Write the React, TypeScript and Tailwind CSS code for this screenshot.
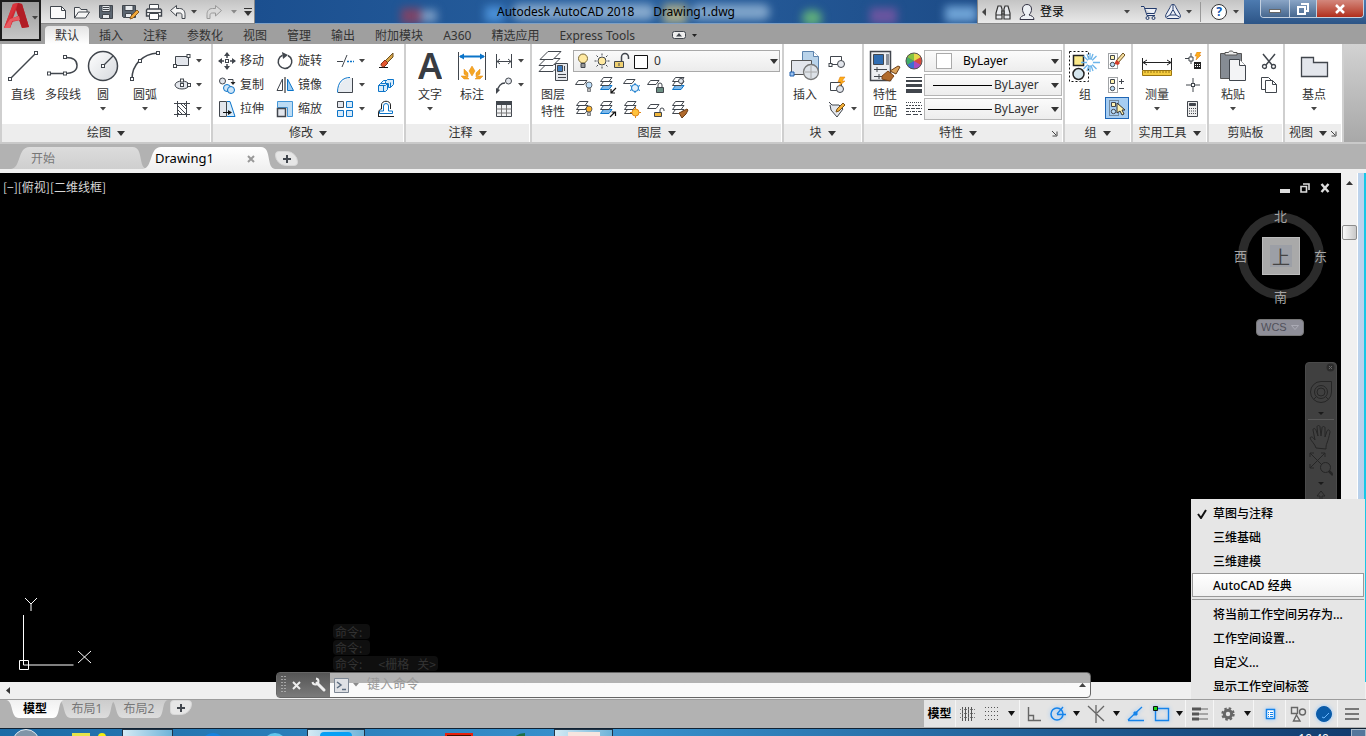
import React from "react";

const D = "#41464d";
const B = "#0b74c9";
const L = "#e3e6ec";

type P = { children?: React.ReactNode };

function Svg({ w, h, children, className = "" }: P & { w: number; h: number; className?: string }) {
  return (
    <svg width={w} height={h} viewBox={`0 0 ${w} ${h}`} fill="none" stroke={D} strokeWidth={1} className={`shrink-0 ${className}`} aria-hidden="true">
      {children}
    </svg>
  );
}

const S = ({ children }: P) => <Svg w={18} h={18}>{children}</Svg>;
const Big = ({ children }: P) => <Svg w={32} h={32}>{children}</Svg>;

const Caret = ({ light = false }: { light?: boolean }) => (
  <svg width="6" height="4" viewBox="0 0 6 4" className="shrink-0" aria-hidden="true">
    <path d="M0 0h6L3 3.500z" fill={light ? "#8a8a8a" : "#444"} />
  </svg>
);
const CaretL = () => (
  <svg width="8" height="5" viewBox="0 0 8 5" className="shrink-0" aria-hidden="true">
    <path d="M0 0h8L4 5z" fill="#333" />
  </svg>
);
const Corner = () => (
  <svg width="7" height="7" viewBox="0 0 7 7" fill="none" stroke="#444" aria-hidden="true">
    <path d="M1 1l4 4M6 1.500v4.500h-4.500" />
  </svg>
);

const Node = ({ x, y, c = D }: { x: number; y: number; c?: string }) => (
  <rect x={x - 1.5} y={y - 1.5} width="3" height="3" fill="#fff" stroke={c} />
);

const Sheet = ({ x = 0, y = 0, fill = "#fff", c = D }: { x?: number; y?: number; fill?: string; c?: string }) => (
  <path d={`M${x + 3.5} ${y + 0.5}h8.500l-3 4h-8.500z`} fill={fill} stroke={c} />
);
const Stack = ({ blue = false }: { blue?: boolean }) => (
  <g>
    <Sheet x={1} y={9} fill={blue ? "#7fb9ea" : "#fff"} c={blue ? B : D} />
    <Sheet x={1} y={5} />
    <Sheet x={1} y={1} />
  </g>
);

/* ---------- controls ---------- */

function BigButton({ icon, label, caret = false, w = "w-10" }: { icon: React.ReactNode; label: string; caret?: boolean; w?: string }) {
  return (
    <button type="button" className={`flex shrink-0 flex-col items-center pt-px ${w}`}>
      {icon}
      <span className="mt-px h-6 text-center leading-6 whitespace-nowrap">{label}</span>
      {caret && <Caret />}
    </button>
  );
}

function TallButton({ icon, lines }: { icon: React.ReactNode; lines: string[] }) {
  return (
    <button type="button" className="flex w-10 shrink-0 flex-col items-center pt-px">
      {icon}
      <span className="pt-1 leading-[17px]">
        {lines.map((l) => (
          <span key={l} className="block">{l}</span>
        ))}
      </span>
    </button>
  );
}

function Tool({ icon, name, label, caret = false }: { icon: React.ReactNode; name: string; label?: string; caret?: boolean }) {
  return (
    <button type="button" aria-label={label ? undefined : name} className="flex h-6 items-center">
      {icon}
      {label && <span className="pl-1 whitespace-nowrap">{label}</span>}
      {caret && <span className="pl-[5px]"><Caret /></span>}
    </button>
  );
}

function Panel({ title, w, children, arrow = true, corner = false }: P & { title: string; w: string; arrow?: boolean; corner?: boolean }) {
  return (
    <section className={`flex shrink-0 flex-col border-r-2 border-[#cfcfcf] bg-white pr-px ${w}`}>
      <div className="flex h-20 pt-[5px] pl-px">{children}</div>
      <button type="button" className={`relative flex h-[18px] items-center justify-center gap-1.5 bg-[#ededed] whitespace-nowrap ${corner ? "pr-2.5" : ""}`}>
        {title}
        {arrow && <CaretL />}
        {corner && <span className="absolute right-1"><Corner /></span>}
      </button>
    </section>
  );
}

/* ---------- title bar ---------- */

const q = "flex h-6 w-6 items-center justify-center";

function QuickAccess() {
  return (
    <div className="flex h-6 w-[214px] shrink-0 items-center border-r border-b border-[#888] bg-gradient-to-b from-[#c4c4c4] to-[#e9e9e9] pl-[5px]">
      <button type="button" aria-label="新建" className={q}><S><path d="M1.500 3.500h11l4 4v8h-15z" fill="#fbfbfb" /><path d="M12.500 3.500v4h4" /></S></button>
      <button type="button" aria-label="打开" className={q}><S><path d="M1.500 15V4.500h5l1.500 2h6V9M1.500 15l4-6h11l-4 6z" fill="#f5f5f5" /></S></button>
      <button type="button" aria-label="保存" className={q}><S><path d="M2.500 2.500h13v13h-12l-1-1z" fill="#5b6570" /><path d="M5 2.500h8v6H5z" fill="#e8ebee" /><path d="M5.500 11.500h7v4h-7z" fill="#e8ebee" /><path d="M6 4.500h6M6 6.500h6" /></S></button>
      <button type="button" aria-label="另存为" className={q}><S><path d="M1.500 2.500h13v12h-12l-1-1z" fill="#5b6570" /><path d="M4 2.500h8v5H4z" fill="#e8ebee" /><path d="M4.500 10.500h6v4h-6z" fill="#e8ebee" /><path d="M9 16l1-3 6-6 2 2-6 6z" fill="#f2a93b" stroke="#8a5a1e" /></S></button>
      <button type="button" aria-label="打印" className={q}><S><path d="M4.500 7V1.500h9V7" fill="#fff" /><path d="M1.500 7l1-1h13l1 1v6h-15z" fill="#f1f1f1" strokeWidth="1.400" /><path d="M4.500 10.500h9v6h-9z" fill="#fff" /><path d="M2 9.500h14" /></S></button>
      <button type="button" aria-label="放弃" className={q}><S><path d="M1.500 7.500l6-5v3h3c4 0 5.500 3 5.500 6v4h-3v-3c0-1.500-.500-2.500-2.500-2.500h-3v3z" fill="#f4f4f4" /></S></button>
      <span className="flex w-2 justify-center"><Caret /></span>
      <button type="button" aria-label="重做" className={`${q} ml-1`}><S><path d="M16.500 7.500l-6-5v3h-3c-4 0-5.500 3-5.500 6v4h3v-3c0-1.500.500-2.500 2.500-2.500h3v3z" fill="#d8d8d8" stroke="#999" /></S></button>
      <span className="ml-1 flex w-2 justify-center"><Caret light /></span>
      <button type="button" aria-label="自定义快速访问工具栏" className="ml-1.5 flex flex-col items-center gap-0.5">
        <span className="h-px w-2 bg-[#333]" />
        <CaretL />
      </button>
    </div>
  );
}

function TitleBar() {
  return (
    <div className="flex h-6 shrink-0">
      <QuickAccess />
      <div className="relative min-w-0 flex-1 overflow-hidden border-b border-[#7fa0c4] bg-gradient-to-r from-[#1b4f8f] via-[#28609f] to-[#1d4c88]">
        <div aria-hidden="true" className="absolute inset-0 flex items-center blur-[4px]">
          <span className="mt-2 ml-[146px] h-4 w-5 bg-[#7c4468]" />
          <span className="mt-2 h-3 w-4 bg-[#7b9cc4]" />
          <span className="mt-1 ml-12 h-4 w-5 bg-[#4a8fd6]" />
          <span className="ml-2 h-4 w-[144px] rounded-lg bg-[#86a9cd]" />
          <span className="mt-1 ml-2 h-5 w-6 bg-[#a5a98c]" />
          <span className="ml-1 h-4 w-20 rounded-lg bg-[#7fa4ca]" />
          <span className="mt-3 ml-8 h-4 w-5 rounded-full bg-[#5fae7c]" />
          <span className="mt-2 ml-12 h-4 w-7 bg-[#6a55a0]" />
          <span className="mt-1 ml-12 h-4 w-8 bg-[#6fa3d6]" />
        </div>
        <h1 className="relative text-center leading-[23px] whitespace-pre text-black">Autodesk AutoCAD 2018{"      "}Drawing1.dwg</h1>
      </div>
      <div className="flex w-[267px] shrink-0 items-center border-b border-l border-[#888] bg-gradient-to-b from-[#c4c4c4] to-[#e9e9e9] pl-1 text-black">
        <button type="button" aria-label="折叠" className="w-2"><svg width="4" height="8" viewBox="0 0 4 8" aria-hidden="true"><path d="M4 0v8L0 4z" fill="#444" /></svg></button>
        <button type="button" aria-label="搜索" className="ml-1"><Svg w={18} h={18}><g fill="#e6e8ec" stroke="#333" strokeWidth="1.200"><path d="M2 16v-6l2-7h3l1 3v10zM16 16v-6l-2-7h-3l-1 3v10z" /><path d="M8 8h2v3H8zM2 12h6M10 12h6" /></g></Svg></button>
        <button type="button" className="ml-1.5 flex items-center gap-1"><Svg w={18} h={18}><path d="M2 16.500c0-3 3-4 5-4.500-2-2-2.500-4-2.500-6 0-3 2-4.500 4.500-4.500s4.500 1.500 4.500 4.500c0 2-.5 4-2.500 6 2 .5 5 1.500 5 4.500z" fill="#eef1f5" stroke="#334" /></Svg>登录</button>
        <span className="ml-[60px]"><Caret /></span>
        <button type="button" aria-label="应用商店" className="ml-2.5"><Svg w={18} h={18}><path d="M1 3.500h3l3 9h8M5 5.500h11.500l-2 5H7" fill="#eef1f8" stroke="#223a6b" /><circle cx="7.500" cy="15" r="1.500" stroke="#223a6b" /><circle cx="13.500" cy="15" r="1.500" stroke="#223a6b" /></Svg></button>
        <button type="button" aria-label="Autodesk 360" className="ml-1.5 flex items-center gap-1"><Svg w={18} h={18}><g stroke="#223a6b"><path d="M9 1.500c2 0 2.500 1.500 3 3l4 7c1 2 0 4-2 4H4c-2 0-3-2-2-4l4-7c.5-1.500 1-3 3-3z" fill="#eef1f8" /><path d="M9 6.500l3 5.500H6zM9 2v4M2.500 14l3.500-2M15.500 14L12 12" /></g></Svg><Caret /></button>
        <span className="ml-2 h-5 w-px bg-[#999]" />
        <button type="button" aria-label="帮助" className="ml-2.5 flex items-center gap-1.5">
          <span className="flex h-4 w-4 items-center justify-center rounded-full border border-[#333] bg-white text-xs font-bold text-[#1258b0]">?</span>
          <Caret />
        </button>
      </div>
      <div className="flex w-[122px] shrink-0 bg-gradient-to-b from-[#4d7bb0] to-[#2c5486] pr-0.5 pl-4">
        <div className="flex h-[18px] flex-1 overflow-hidden rounded-b border border-t-0 border-[#c3d0e0]">
          <button type="button" aria-label="最小化" className="flex w-7 items-center justify-center bg-gradient-to-b from-[#8aa5c6] to-[#47688f]"><span className="mt-1 h-1 w-3 border border-[#666] bg-white" /></button>
          <button type="button" aria-label="还原" className="flex w-7 items-center justify-center border-x border-[#c3d0e0] bg-gradient-to-b from-[#8aa5c6] to-[#47688f]"><Svg w={12} h={12}><path d="M4 1h7v7H9M1 4h7v7H1z" stroke="#fff" strokeWidth="2" /></Svg></button>
          <button type="button" aria-label="关闭" className="flex flex-1 items-center justify-center bg-gradient-to-b from-[#d3877c] to-[#b02c1a]"><Svg w={12} h={10}><path d="M2 1l8 8M10 1L2 9" stroke="#fff" strokeWidth="2.500" /></Svg></button>
        </div>
      </div>
    </div>
  );
}

const ribbonTabs = ["默认", "插入", "注释", "参数化", "视图", "管理", "输出", "附加模块", "A360", "精选应用", "Express Tools"];

function Header() {
  return (
    <header className="flex shrink-0 bg-[#9f9f9f]">
      <button type="button" aria-label="应用程序菜单" className="flex h-[41px] w-[41px] shrink-0 items-start border-2 border-[#1d1d1d] bg-gradient-to-b from-[#9b9b9b] to-[#c6c6c6] pl-0.5">
        <Svg w={26} h={30}>
          <g stroke="none">
            <path d="M0 26L9 2l5-1 4 1 7 23-7 1-3-8-6 1-3 7z" fill="#cf2a33" />
            <path d="M9 2l5-1-8 16 9-3 1 4-8 2-2 6-6 0z" fill="#d9343d" />
            <path d="M14 1l4 1 7 23-7 1-6-18z" fill="#b11c25" />
            <path d="M12 8l2 6-5 2z" fill="#a9a9a9" />
            <path d="M0 26l6-9 9-3 1 4-8 1-2 7z" fill="#e85b62" />
          </g>
        </Svg>
        <span className="mt-3.5 pl-0.5"><Caret /></span>
      </button>
      <div className="min-w-0 flex-1">
        <TitleBar />
        <nav className="flex h-5 items-end pl-1">
          {ribbonTabs.map((t, i) => (
            <button
              key={t}
              type="button"
              className={`h-[18px] shrink-0 px-2.5 leading-5 whitespace-nowrap ${i === 0 ? "rounded-t-sm bg-gradient-to-b from-[#e4e4e4] to-white" : ""}`}
            >
              {t}
            </button>
          ))}
          <button type="button" aria-label="最小化功能区" className="ml-[27px] flex h-[18px] items-center gap-1.5">
            <Svg w={14} h={8}><rect x=".5" y=".5" width="13" height="7" rx="2" fill="#eee" /><path d="M4 5.500h6L7 2z" fill={D} stroke="none" /></Svg>
            <svg width="5" height="3" viewBox="0 0 5 3" aria-hidden="true"><path d="M0 0h5L2.500 3z" fill="#222" /></svg>
          </button>
        </nav>
      </div>
    </header>
  );
}

/* ---------- ribbon ---------- */

function DrawPanel() {
  return (
    <Panel title="绘图" w="w-[211px]">
      <BigButton label="直线" icon={<Big><path d="M3 29L29 3" strokeWidth="1.500" /><Node x={3} y={29} /><Node x={29} y={3} /></Big>} />
      <BigButton label="多段线" icon={<Big><path d="M2 23.500h15c8 0 13-2 13-8s-5-8-11-8" strokeWidth="1.500" /><Node x={2} y={23.5} /><Node x={18} y={23.5} /><Node x={18} y={7} /></Big>} />
      <BigButton label="圆" caret icon={<Big><defs><linearGradient id="cg" x1="0" y1="0" x2="1" y2="1"><stop stopColor="#fff" /><stop offset="1" stopColor="#d5d8dd" /></linearGradient></defs><circle cx="16" cy="16" r="14.500" fill="url(#cg)" strokeWidth="1.500" /><path d="M16 16L26 6" strokeWidth="1.200" /><Node x={16} y={16} /></Big>} />
      <BigButton label="圆弧" caret w="w-11" icon={<Big><path d="M3 29C3 15 13 4 29 3" strokeWidth="1.500" /><Node x={3} y={29} /><Node x={11} y={11} /><Node x={29} y={3} /></Big>} />
      <div className="ml-1.5">
        <Tool name="矩形" caret icon={<S><path d="M2.500 4.500h13v9h-13z" fill={L} /><Node x={2} y={14} /><Node x={15.5} y={4} /></S>} />
        <Tool name="椭圆" caret icon={<S><ellipse cx="9" cy="9" rx="7" ry="4" fill={L} /><Node x={9} y={9} /><Node x={9} y={4.5} /><Node x={16} y={9} /></S>} />
        <Tool name="图案填充" caret icon={<S><path d="M4.500 1v16M13.500 1v16M1 3.500h16M1 14.500h16M5 6l8 8M5 10l4 4M8 4l5 5M5 13l1 1M11 4l2 2" /></S>} />
      </div>
    </Panel>
  );
}

function ModifyPanel() {
  return (
    <Panel title="修改" w="w-[193px]">
      <div className="ml-1 w-[58px]">
        <Tool name="移动" label="移动" icon={<S><path d="M9 1v5M9 12v5M1 9h5M12 9h5" strokeWidth="1.500" /><path d="M9 0l3 4H6zM9 18l3-4H6zM0 9l4-3v6zM18 9l-4-3v6z" fill={D} stroke="none" /><Node x={9} y={9} /></S>} />
        <Tool name="复制" label="复制" icon={<S><circle cx="4.500" cy="5" r="3" fill={L} /><circle cx="9" cy="12" r="3.500" stroke={B} fill="#cfe5f7" /><circle cx="13" cy="14" r="3.500" stroke={B} fill="#cfe5f7" /><path d="M10 3.500h5v4" /><path d="M12.500 6h5L15 9z" fill="#222" stroke="none" /></S>} />
        <Tool name="拉伸" label="拉伸" icon={<S><path d="M1.500 1.500h7v15h-7z" fill={L} /><path d="M9 1.500h3l5 15H9" stroke={B} fill="#d9ebf9" /><path d="M5 12.500h6" stroke="#111" /><path d="M10 10l4 2.500-4 2.500z" fill="#111" stroke="none" /></S>} />
      </div>
      <div className="w-[60px]">
        <Tool name="旋转" label="旋转" icon={<S><path d="M12 3.500a6.800 6.800 0 1 1-5.500-.2" strokeWidth="1.500" /><path d="M6 0l6 3-5 4z" fill={D} stroke="none" /></S>} />
        <Tool name="镜像" label="镜像" icon={<S><path d="M6.500 3v11.500h-5.500z" /><path d="M11.500 3v11.500h6z" stroke={B} fill="#9fcdf0" /><path d="M9 1v16" stroke="#111" /></S>} />
        <Tool name="缩放" label="缩放" icon={<S><path d="M1.500 1.500h15v15h-5v-9h-10z" stroke="#4597d8" fill="#bcdcf5" /><path d="M1.500 8.500h8v8h-8z" fill={L} strokeWidth="1.500" /></S>} />
      </div>
      <div className="w-[41px]">
        <Tool name="修剪" caret icon={<S><path d="M1 9.500h6M6 15l5-12" /><path d="M11 9.500h7" stroke={B} strokeDasharray="2 1" strokeWidth="1.500" /></S>} />
        <Tool name="圆角" caret icon={<S><path d="M16.500 2v14.500H2C2.500 7 8 2 16.500 2z" fill="#e8ecf1" stroke="none" /><path d="M16.500 2v14.500H2" /><path d="M1.500 16.500C1.500 6 7 1.500 14 1.500" stroke={B} /></S>} />
        <Tool name="阵列" caret icon={<S><path d="M1.500 1.500h6v6h-6z" fill={L} /><path d="M10.500 1.500h6v6h-6zM1.500 10.500h6v6h-6zM10.500 10.500h6v6h-6z" stroke={B} fill="#d9ebf9" /></S>} />
      </div>
      <div>
        <Tool name="删除" icon={<S><path d="M2 15.500h9" stroke="#111" /><path d="M8 9l8-8v4l-6 6z" fill="#d7a54a" stroke="#6d5120" /><path d="M4 12l4-4 3 3-4 4c-2 0-3-1-3-3z" fill="#e4572e" stroke="#81341c" /></S>} />
        <Tool name="分解" icon={<S><g stroke={B} fill="#d9ebf9"><path d="M1.500 9.500l2-2h7v6l-2 2h-7z" /><path d="M8.500 5.500l2-2h6v5l-3 3h-2v-4h-3zM13.500 11.500v-5M3.500 7.500l3-3h3M6.500 9.500v6M1.500 9.500h7l2-2" /></g></S>} />
        <Tool name="偏移" icon={<S><path d="M6.500 11V6a2.500 2.500 0 0 1 5 0v5h4v2.500h-13V11z" stroke={B} /><path d="M1 16.500h16M1.500 16v-3c0-3 2-4 3-4V5c0-5 9-5 9 0v4" stroke="#222" /></S>} />
      </div>
    </Panel>
  );
}

function AnnotatePanel() {
  return (
    <Panel title="注释" w="w-[126px]">
      <BigButton label="文字" caret w="w-[46px]" icon={<span className="h-8 overflow-hidden font-['Noto_Sans',sans-serif] text-[36px] leading-8 font-semibold text-[#383c42]">A</span>} />
      <BigButton label="标注" w="w-[38px]" icon={<Big><path d="M2.500 2v28M29.500 2v28" /><path d="M4 6.500h24" stroke={B} strokeWidth="2" /><path d="M3 6.500l5-3v6zM29 6.500l-5-3v6z" fill={B} stroke="none" /><g fill="#f5a623" stroke="#e58a17" strokeWidth=".5"><path d="M16 16l3 5-3 5-3-5zM8 19l4 4 0 4-4-3zM24 19l-4 4 0 4 4-3zM5 26h5l3 3H8zM27 26h-5l-3 3h5z" /></g></Big>} />
      <div className="ml-1">
        <Tool name="线性" caret icon={<S><path d="M1.500 2v14M16.500 2v14M2 9.500h14M5 7l-3 2.500L5 12M13 7l3 2.500L13 12" /></S>} />
        <Tool name="引线" caret icon={<S><path d="M2 16c1-5 3-9 8-9" strokeWidth="1.300" /><circle cx="13.500" cy="5" r="3" fill={L} /><path d="M1 18l0-6 4 2z" fill={D} stroke="none" /></S>} />
        <Tool name="表格" icon={<S><path d="M1.500 1.500h15v15h-15z" fill="#f2f3f5" /><path d="M1 1h16v4H1z" fill={D} stroke="none" /><path d="M1.500 9h15M1.500 13h15M6.500 5v11M11.500 5v11" stroke="#777" /></S>} />
      </div>
    </Panel>
  );
}

const bulb = (c: string, x: number, y: number) => (
  <g><circle cx={x} cy={y} r="3" fill={c} stroke={D} strokeWidth=".8" /><path d={`M${x - 1.5} ${y + 3.5}h3v3h-3z`} fill="#bbb" stroke={D} strokeWidth=".6" /></g>
);
const arrow = (up: boolean) => <path d={up ? "M11 17l5-5M12.500 12h4v4" : "M17 12l-5 5M12 13v4h4"} stroke="#111" strokeWidth="1.200" />;

const layerTools: [string, React.ReactNode][] = [
  ["关闭图层", <S key="a"><Sheet x={0} y={4} />{bulb("#bfe0fb", 14, 9)}</S>],
  ["隔离", <S key="b"><Stack blue />{arrow(false)}</S>],
  ["冻结", <S key="c"><Sheet x={0} y={3} /><g stroke={B}><path d="M12 7v10M7 9.500l10 5M17 9.500l-10 5" /><circle cx="12" cy="12" r="3.500" fill="#e2f0fc" /></g></S>],
  ["锁定", <S key="d"><Sheet x={0} y={4} /><path d="M9.500 11.500h7v5h-7z" fill="#6c8f83" /><path d="M11 11V9a2 2 0 0 1 4 0v2" /></S>],
  ["置为当前", <S key="e"><Stack blue /><circle cx="10" cy="5" r="2.500" fill="#e3e6ec" /></S>],
  ["打开所有图层", <S key="f"><Stack />{bulb("#ffb52e", 14, 9)}</S>],
  ["取消隔离", <S key="g"><Stack blue />{arrow(true)}</S>],
  ["解冻", <S key="h"><Stack /><circle cx="12.500" cy="12.500" r="3.500" fill="#ffc23c" stroke="#e0861a" /><path d="M12.500 7v2M12.500 16v2M7 12.500h2M16 12.500h2" stroke="#e0861a" /></S>],
  ["解锁", <S key="i"><Sheet x={0} y={4} /><path d="M7.500 12.500h7v4h-7z" fill="#f0b63a" /><path d="M13 12v-2a2 2 0 0 1 4 0v1" /></S>],
  ["匹配图层", <S key="j"><Stack /><path d="M8 13l4-2 4-2 1 1-2 4-4 4z" fill="#b06a2c" stroke="#6b3d15" /></S>],
];

function LayersPanel() {
  return (
    <Panel title="图层" w="w-[252px]">
      <TallButton
        lines={["图层", "特性"]}
        icon={
          <Big>
            <g fill="#fff"><path d="M9 14.500h14l-7 7H2z" /><path d="M9 8.500h14l-7 7H2z" /><path d="M11 1.500h13l-8 8H3z" /></g>
            <path d="M18.500 13.500h12v17h-12z" fill="#e6e8ec" />
            <path d="M20.500 15.500h5v6h-5z" fill="#3d7cc0" />
            <path d="M27.500 16v5M21 24.500h8M21 27.500h8" />
          </Big>
        }
      />
      <div className="mr-px flex-1">
        <div className="relative flex h-6 items-center">
          <select aria-label="图层" className="h-[22px] w-full appearance-none border border-[#a9a9a9] bg-gradient-to-b from-[#fafafa] to-[#ececec] pl-20 outline-none">
            <option>0</option>
          </select>
          <div className="pointer-events-none absolute inset-0 flex items-center gap-0.5 pl-0.5">
            <Svg w={16} h={18}><circle cx="8" cy="6.500" r="4.500" fill="#ffe9a0" stroke="#7a6a3a" /><path d="M6 11.500h4v4H6z" fill="#999" /></Svg>
            <S><circle cx="9" cy="9" r="4" fill="#ffe9a0" /><path d="M9 1.500v2M9 14.500v2M1.500 9h2M14.500 9h2M3.500 3.500l1.500 1.500M13 13l1.500 1.500M14.500 3.500L13 5M5 13l-1.500 1.500" /></S>
            <S><path d="M1.500 9.500h9v6h-9z" fill="#f0d070" /><path d="M8.500 9V5a3.500 3.500 0 0 1 7 0v2" strokeWidth="1.500" /><path d="M6 11v3" /></S>
            <Svg w={15} h={15}><path d="M1.500 1.500h13v13h-13z" fill="#fff" stroke="#111" /></Svg>
            <span className="ml-auto pr-0.5"><CaretL /></span>
          </div>
        </div>
        <div className="grid w-fit grid-cols-[repeat(5,24px)] pl-0.5">
          {layerTools.map(([n, i]) => <Tool key={n} name={n} icon={i} />)}
        </div>
      </div>
    </Panel>
  );
}

function BlockPanel() {
  return (
    <Panel title="块" w="w-[80px]">
      <BigButton
        label="插入"
        icon={
          <Big>
            <path d="M13.500 1.500h11l5 5v16h-16z" fill="#b9d3ea" stroke="#5c83ad" />
            <path d="M24.500 1.500v5h5" fill="#fff" stroke="#5c83ad" />
            <path d="M2.500 10.500h20v14h-20z" fill={L} stroke="#555" />
            <circle cx="22" cy="22" r="7.500" fill="#dde2e8" stroke="#777" strokeWidth="1.300" />
            <path d="M22 16v12M16 22h12" stroke="#aaa" />
            <path d="M1 22h4v4H1z" fill="#9cc2ee" stroke="#1f5fae" />
          </Big>
        }
      />
      <div className="ml-[3px] shrink-0">
        <Tool name="创建块" icon={<S><path d="M2.500 4.500h11v8h-11z" fill="#fff" /><circle cx="13" cy="12" r="3.500" fill={L} /><Node x={2.5} y={13} /></S>} />
        <Tool name="编辑块" icon={<S><path d="M2.500 6.500h11v8h-11z" fill="#fff" /><circle cx="12" cy="13" r="3.500" fill={L} /><path d="M12 1h5l-3 4h3l-6 5 2-4h-3z" fill="#ffae1a" stroke="#d9760b" strokeWidth=".5" /></S>} />
        <Tool name="编辑属性" caret icon={<S><path d="M1 2l3 3h7l4 4-6 8-6-7-1-5" fill={L} /><path d="M8 12l1-3 6-6 2 2-6 6z" fill="#f2b03b" stroke="#7a5216" /></S>} />
      </div>
    </Panel>
  );
}

function LayerSelect({ label, kind }: { label: string; kind: "color" | "weight" | "type" }) {
  return (
    <div className="relative flex h-6 items-center">
      <select
        aria-label={label}
        className={`h-[22px] w-full appearance-none border border-[#b5b5b5] bg-gradient-to-b from-[#fbfbfb] to-[#ededed] outline-none ${kind === "color" ? "pl-[38px] text-black" : "pl-[69px]"}`}
      >
        <option>ByLayer</option>
      </select>
      <div className="pointer-events-none absolute inset-0 flex items-center">
        {kind === "color" && <span className="ml-3 h-4 w-4 border border-[#aaa] bg-white" />}
        {kind === "weight" && <span className="ml-[9px] h-px w-[59px] bg-black" />}
        {kind === "type" && <span className="ml-1 h-px w-16 bg-black" />}
        <span className="ml-auto pr-[3px]"><CaretL /></span>
      </div>
    </div>
  );
}

function PropsPanel() {
  return (
    <Panel title="特性" w="w-[201px]" corner>
      <TallButton
        lines={["特性", "匹配"]}
        icon={
          <Big>
            <path d="M1.500 1.500h20v29h-20z" fill="#eceef1" strokeWidth="1.500" />
            <path d="M4.500 4.500h10v10h-10z" fill="#2f6db2" />
            <path d="M17 4v11h3V4z" fill="#8a9099" stroke="none" />
            <path d="M5 19.500h13M8 17v5M5 26.500h8M10 24v5" />
            <path d="M21 21l8-5 2 1-4 7z" fill="#d9a15a" stroke="#6b3d15" />
            <path d="M13 26l6-5 6 5-4 5-8-2z" fill="#b06a2c" stroke="#7a4316" />
          </Big>
        }
      />
      <div className="mr-px w-[18px] shrink-0">
        <Tool name="对象颜色" icon={<S><g stroke="none"><circle cx="9" cy="9" r="8" fill="#d94a3a" /><path d="M9 9V1a8 8 0 0 1 7 4z" fill="#e8d84a" /><path d="M9 9L2 5a8 8 0 0 1 7-4z" fill="#86c440" /><path d="M9 9L2 13a8 8 0 0 1 0-8z" fill="#3fae6a" /><path d="M9 9v8a8 8 0 0 1-7-4z" fill="#3a6fd1" /><path d="M9 9l7 4a8 8 0 0 1-7 4z" fill="#a94bc0" /></g><circle cx="9" cy="9" r="8" stroke="#555" /></S>} />
        <Tool name="线宽" icon={<S><g stroke="none" fill={D}><path d="M1 1h16v1H1zM1 4h16v2H1zM1 8h16v3H1zM1 13h16v4H1z" /></g></S>} />
        <Tool name="线型" icon={<S><path d="M1 2.500h16" strokeDasharray="1 1" /><path d="M1 5.500h16" strokeDasharray="2 1" /><path d="M1 8.500h16" strokeDasharray="4 1" /><path d="M1 11.500h16" strokeDasharray="3 1 1 1" /><path d="M1 14.500h16" strokeDasharray="5 2" /></S>} />
      </div>
      <div className="flex-1">
        <LayerSelect label="颜色" kind="color" />
        <LayerSelect label="线宽" kind="weight" />
        <LayerSelect label="线型" kind="type" />
      </div>
    </Panel>
  );
}

const groupBase = (
  <g><path d="M1.500 1.500h9v15h-9z" strokeDasharray="1 1" /><path d="M3.500 3.500h4v4h-4z" fill="#fff3b0" /><circle cx="5.500" cy="12.500" r="2.200" fill="#bcdcf5" /></g>
);

function GroupPanel() {
  return (
    <Panel title="组" w="w-[68px]">
      <BigButton
        label="组"
        w="w-[38px]"
        icon={
          <Big>
            <path d="M.5 1.500h19v30H.500z" strokeDasharray="2 2" stroke="#111" />
            <path d="M4.500 5.500h10v10h-10z" fill="#fbe98a" stroke="#222" strokeWidth="1.500" />
            <circle cx="9.500" cy="24" r="5.500" fill="#d5e6ee" stroke="#222" strokeWidth="1.500" />
            <g stroke="#6db5ea" strokeWidth="1.300"><path d="M21 3v19M12 12.500h19M14.500 6l13 13M27.500 6l-13 13M18 4l6 17M24 4l-6 17" /></g>
            <circle cx="21" cy="12.500" r="3" fill="#fff" stroke="none" />
          </Big>
        }
      />
      <div className="flex flex-col pl-px">
        <Tool name="解除编组" icon={<span className="px-0.5"><S>{groupBase}<path d="M9 9l7-8 2 2-7 8z" fill="#f6dfa0" stroke="#6d5120" /><path d="M8 10l2-2 3 3-2 2-3-1z" fill="#d23c2a" stroke="none" /></S></span>} />
        <Tool name="组编辑" icon={<span className="px-0.5"><S>{groupBase}<path d="M12 5.500h5M14.500 3v5M12 12.500h5" /></S></span>} />
        <button type="button" aria-label="启用组选择" aria-pressed="true" className="flex h-[22px] w-6 items-center justify-center border border-[#1f66b5] bg-[#a6cdf2]">
          <S>{groupBase}<path d="M9 4v10l3-2 2 4 2-1-2-4h3z" fill="#fff3b0" stroke="#333" /></S>
        </button>
      </div>
    </Panel>
  );
}

function UtilPanel() {
  return (
    <Panel title="实用工具" w="w-[76px]">
      <BigButton label="测量" caret w="w-[46px]" icon={<Big><path d="M1.500 8v12M30.500 8v12M2 12.500h28M6 10l-4 2.500L6 15M26 10l4 2.500L26 15" stroke="#222" /><path d="M1.500 20.500h29v5h-29z" fill="#f3cb3e" stroke="#9a7410" /><path d="M4 21v2M7 21v2M10 21v2M13 21v2M16 21v2M19 21v2M22 21v2M25 21v2M28 21v2" stroke="#9a7410" /></Big>} />
      <div className="ml-1">
        <Tool name="快速选择" icon={<S><path d="M1 6.500h4M7 1v4M7 8v4" /><path d="M5 5h4v4H5z" fill="#fff" /><path d="M13 0h4l-2 3h2l-5 5 1-4h-2z" fill="#ffae1a" stroke="#d9760b" strokeWidth=".5" /><path d="M10 10h7v7h-7z" fill="#222" stroke="none" /><path d="M11 12.500h5M11 14.500h5" stroke="#fff" strokeDasharray="1 1" /></S>} />
        <Tool name="点" icon={<S><path d="M9 2v5M9 11v5M2 9h5M11 9h5" /><Node x={9} y={9} /></S>} />
        <Tool name="计算器" icon={<S><path d="M3.500 1.500h10v15h-10z" fill="#eee" /><path d="M5.500 3.500h6v2h-6z" fill={D} /><path d="M5 8.500h7M5 11h7M5 13.500h7" strokeDasharray="1 1" /></S>} />
      </div>
    </Panel>
  );
}

function ClipPanel() {
  return (
    <Panel title="剪贴板" w="w-[76px]" arrow={false}>
      <BigButton label="粘贴" caret w="w-[46px]" icon={<Big><path d="M3.500 3.500h21v25h-21z" fill="#868c94" stroke="#555" /><path d="M8 5V2.500h3.500c0-2 5-2 5 0H20V5z" fill="#ececec" stroke="#555" /><path d="M12.500 9.500h10l6 6v15h-16z" fill="#f3f4f6" /><path d="M22.500 9.500v6h6" fill="#fff" /></Big>} />
      <div className="ml-1">
        <Tool name="剪切" icon={<S><path d="M3 2l9 11M15 2L6 13" strokeWidth="1.500" /><circle cx="4.500" cy="14.500" r="2" strokeWidth="1.300" /><circle cx="13.500" cy="14.500" r="2" strokeWidth="1.300" /></S>} />
        <Tool name="复制剪裁" icon={<S><path d="M1.500 1.500h7l3 3v9h-10z" fill="#fff" /><path d="M5.500 4.500h7l4 4v8h-11z" fill="#fff" /><path d="M12.500 4.500v4h4" /></S>} />
      </div>
    </Panel>
  );
}

function Ribbon() {
  return (
    <div className="flex h-[100px] shrink-0 border-b-2 border-[#c9c9c9] bg-gradient-to-b from-[#d2d2d2] to-[#a8a8a8]">
      <div className="flex shrink-0 border-l-2 border-[#cfcfcf]">
        <DrawPanel />
        <ModifyPanel />
        <AnnotatePanel />
        <LayersPanel />
        <BlockPanel />
        <PropsPanel />
        <GroupPanel />
        <UtilPanel />
        <ClipPanel />
        <Panel title="视图" w="w-[59px]" corner>
          <BigButton label="基点" caret w="w-14" icon={<Big><path d="M3.500 7.500h12v5h14v14h-26z" fill={L} strokeWidth="1.300" /></Big>} />
        </Panel>
      </div>
    </div>
  );
}

/* ---------- file tabs ---------- */

const TabShape = ({ from, to, id }: { from: string; to: string; id: string }) => (
  <svg className="absolute inset-0 h-full w-full" viewBox="0 0 132 22" preserveAspectRatio="none" aria-hidden="true">
    <defs><linearGradient id={id} x1="0" y1="0" x2="0" y2="1"><stop stopColor={from} /><stop offset="1" stopColor={to} /></linearGradient></defs>
    <path d="M0 22C10 21 6 0 18 0h100c11 0 5 21 14 22z" fill={`url(#${id})`} />
  </svg>
);

function FileTabs() {
  return (
    <div className="flex h-[29px] shrink-0 items-end border-b-4 border-[#f0f0f0] bg-[#b2b2b2] pl-[11px]">
      <button type="button" className="relative -mr-1 h-[22px] w-[136px] pt-0.5 pl-5 text-left text-[#777]">
        <TabShape id="t1" from="#dcdcdc" to="#cfcfcf" />
        <span className="relative">开始</span>
      </button>
      <div className="relative flex h-[22px] w-[132px] items-center justify-between pt-0.5 pr-5 pl-3 text-black">
        <TabShape id="t2" from="#ffffff" to="#f0f0f0" />
        <button type="button" className="relative text-[13px]">Drawing1</button>
        <button type="button" aria-label="关闭 Drawing1" className="relative"><Svg w={8} h={8}><path d="M1 1l6 6M7 1L1 7" stroke="#999" strokeWidth="2" /></Svg></button>
      </div>
      <button type="button" aria-label="新建图形" className="mb-[3px] flex h-[15px] w-[23px] items-center justify-center rounded-tl rounded-tr-xl rounded-br rounded-bl-xl border border-[#d8d8d8] bg-[#e6e6e6]">
        <Svg w={8} h={8}><path d="M4 0v8M0 4h8" strokeWidth="2" /></Svg>
      </button>
    </div>
  );
}

/* ---------- drawing area ---------- */

function ViewCube() {
  return (
    <div className="absolute top-[35px] right-3 h-[102px] w-[96px] text-[13px] leading-4 text-[#a5a5a5]">
      <div className="absolute top-[5px] left-[5px] h-[86px] w-[86px] rounded-full border-[9px] border-[#2b2b2b]" />
      <button type="button" className="absolute top-[29px] left-[29px] flex h-[38px] w-[38px] items-center justify-center border border-[#bcbcbc] bg-[#a9a9a9]">
        <span className="flex h-[22px] w-[22px] items-center justify-center bg-[#9c9fa6] font-['Noto_Sans_CJK_SC',sans-serif] text-lg leading-5 text-[#444]">上</span>
      </button>
      <span className="absolute top-0 left-[41px]">北</span>
      <span className="absolute top-10 left-px">西</span>
      <span className="absolute top-10 left-[81px]">东</span>
      <span className="absolute top-[81px] left-[41px]">南</span>
    </div>
  );
}

function NavBar() {
  return (
    <div className="absolute top-[189px] right-1 flex h-[220px] w-8 flex-col items-center rounded-t border border-[#4a4a4a] bg-[#404040]">
      <button type="button" aria-label="关闭导航栏" className="mr-px self-end"><Svg w={9} h={9}><circle cx="4.500" cy="4.500" r="4" fill="#2c2c2c" stroke="none" /><path d="M3 3l3 3M6 3L3 6" stroke="#666" /></Svg></button>
      <button type="button" aria-label="控制盘" className="mt-2"><Svg w={24} h={24}><g stroke="#262626"><path d="M12 1.500h10.500V12A10.500 10.500 0 1 1 12 1.500z" /><circle cx="12" cy="12" r="6.500" /><circle cx="12" cy="12" r="4" /><path d="M4.500 19.500l3-3M19.500 19.500l-3-3" /></g></Svg></button>
      <span className="mt-2"><svg width="6" height="3" viewBox="0 0 6 3" aria-hidden="true"><path d="M0 0h6L3 3z" fill="#1a1a1a" /></svg></span>
      <span className="mt-1 h-px w-[26px] bg-[#5a5a5a]" />
      <button type="button" aria-label="平移" className="mt-1"><Svg w={24} h={26}><path d="M7 24c-1-4-5-7-6-10 1-2 3-1 5 2L4 6c0-2 2-2 3 0l2 6-1-9c0-2 3-2 3 0l1 9 1-8c0-2 3-2 3 0v9l2-6c1-2 3-1 3 1-1 5-2 8-3 11-1 2-1 4-1 6z" stroke="#262626" /></Svg></button>
      <button type="button" aria-label="范围缩放" className="mt-0.5"><Svg w={24} h={24}><g stroke="#262626"><path d="M1 5V1h4M1 1l15 15M12 1h4v4M16 1L1 16M1 12v4h4" /><circle cx="16.500" cy="15.500" r="5" fill="#404040" /><path d="M20 19l4 4" strokeWidth="2.500" /></g></Svg></button>
      <span className="mt-1.5"><svg width="6" height="3" viewBox="0 0 6 3" aria-hidden="true"><path d="M0 0h6L3 3z" fill="#1a1a1a" /></svg></span>
      <span className="mt-1"><Svg w={24} h={24}><path d="M12 2l4 5h-3v8h-2V7H8z" stroke="#262626" /></Svg></span>
    </div>
  );
}

function Canvas() {
  return (
    <main className="relative min-w-0 flex-1 overflow-hidden bg-black">
      <div className="flex items-start justify-between pr-[11px] pl-[3px] text-xs leading-4 text-[#d8d8d8]">
        <button type="button" className="mt-1.5 font-['Noto_Sans_CJK_SC',sans-serif]">[−][俯视][二维线框]</button>
        <div className="mt-2.5 flex items-center gap-2.5">
          <button type="button" aria-label="最小化视口" className="mt-1.5 h-1 w-2.5 bg-[#ddd]" />
          <button type="button" aria-label="还原视口"><Svg w={10} h={10}><path d="M3 1h6v6M1 3.500h5.500V9H1z" stroke="#ddd" strokeWidth="1.600" /></Svg></button>
          <button type="button" aria-label="关闭视口"><Svg w={10} h={10}><path d="M1.500 1l7 8M8.500 1l-7 8" stroke="#ddd" strokeWidth="2.400" /></Svg></button>
        </div>
      </div>
      <ViewCube />
      <button type="button" className="absolute top-[146px] right-[37px] flex h-[17px] w-12 items-center justify-between rounded border border-[#777] bg-[#8e8e98] px-1 font-['Liberation_Sans',sans-serif] text-[11px] text-[#50505a]">
        WCS
        <Svg w={8} h={5}><path d="M.5.500h7L4 4.500z" stroke="#aaaab4" /></Svg>
      </button>
      <NavBar />
      <svg width="76" height="76" viewBox="0 0 76 76" fill="none" stroke="#fff" className="absolute bottom-2.5 left-[18px]" aria-hidden="true">
        <path d="M5.500 19v50h50M1.500 64.500h9v9h-9zM7 2l6 6 6-6M13 8v7M60 55l13 12M73 55L60 67" />
      </svg>
      <div className="absolute bottom-[11px] left-[333px] flex flex-col items-start gap-px font-['Noto_Sans_CJK_SC',sans-serif] text-xs leading-[15px] text-[#333]">
        <span className="rounded-sm bg-[#0f0f0f] px-0.5 whitespace-pre">命令:{"  "}</span>
        <span className="rounded-sm bg-[#0f0f0f] px-0.5 whitespace-pre">命令:{"  "}</span>
        <span className="rounded-sm bg-[#0f0f0f] px-0.5 whitespace-pre">命令:{"      "}&lt;栅格{"   "}关&gt;</span>
      </div>
    </main>
  );
}

function CommandLine() {
  return (
    <div className="absolute right-[275px] bottom-px left-[276px] flex h-[26px] rounded-sm border border-[#666] bg-gradient-to-b from-[#b2b2b2] from-40% to-[#fafafa] to-40%">
      <div className="flex w-[53px] shrink-0 items-center gap-1.5 bg-gradient-to-b from-[#555] to-[#7b7b7b] pl-1">
        <Svg w={5} h={18}><path d="M1 0v18M4 0v18" stroke="#bbb" strokeDasharray="1 2" strokeWidth="1.500" /></Svg>
        <button type="button" aria-label="关闭命令行"><Svg w={9} h={9}><path d="M1 1l7 7M8 1L1 8" stroke="#eee" strokeWidth="2" /></Svg></button>
        <button type="button" aria-label="自定义" className="ml-1"><Svg w={16} h={16}><path d="M6 6l7 7" stroke="#eee" strokeWidth="3" strokeLinecap="round" /><path d="M5 1.500a3 3 0 1 1-3.500 3.500" stroke="#eee" strokeWidth="2" /></Svg></button>
      </div>
      <button type="button" aria-label="最近使用的命令" className="ml-1 flex items-center gap-1">
        <Svg w={15} h={15}><path d="M.5.500h14v14H.500z" fill="#dfe1e5" stroke="#7d8794" /><path d="M3 4l4 3-4 3M8 11.500h4" stroke="#5d6d80" strokeWidth="1.500" /></Svg>
        <Caret light />
      </button>
      <input aria-label="命令" placeholder="键入命令" className="ml-2 min-w-0 flex-1 bg-transparent pb-0.5 text-[13px] outline-none placeholder:text-[#999]" />
      <button type="button" aria-label="展开命令历史" className="px-1"><svg width="7" height="4" viewBox="0 0 7 4" aria-hidden="true"><path d="M0 4h7L3.500 0z" fill="#444" /></svg></button>
    </div>
  );
}

function MenuItem({ children, checked = false, active = false }: P & { checked?: boolean; active?: boolean }) {
  return (
    <button
      type="button"
      role="menuitem"
      className={`flex h-6 w-full items-center border pt-0.5 text-left ${active ? "border-[#999] bg-gradient-to-b from-white to-[#f1f1f1]" : "border-transparent"}`}
    >
      <span className="flex w-5 pl-1">
        {checked && <Svg w={11} h={10}><path d="M1 5l3 4 5-8" stroke="#111" strokeWidth="2" /></Svg>}
      </span>
      {children}
    </button>
  );
}

function WorkspaceMenu() {
  return (
    <div role="menu" className="absolute right-px bottom-0 w-[174px] bg-[#e6e6e6] px-px pt-0.5 pb-px font-medium text-black">
      <MenuItem checked>草图与注释</MenuItem>
      <MenuItem>三维基础</MenuItem>
      <MenuItem>三维建模</MenuItem>
      <MenuItem active>AutoCAD 经典</MenuItem>
      <hr className="my-0.5 border-[#999]" />
      <MenuItem>将当前工作空间另存为...</MenuItem>
      <MenuItem>工作空间设置...</MenuItem>
      <MenuItem>自定义...</MenuItem>
      <MenuItem>显示工作空间标签</MenuItem>
    </div>
  );
}

/* ---------- bottom bars ---------- */

function LayoutTab({ children, active = false, id }: P & { active?: boolean; id: string }) {
  return (
    <button type="button" className={`relative -mr-1.5 h-[18px] w-[58px] text-center leading-[18px] ${active ? "z-10 font-bold text-black" : "text-[#777]"}`}>
      <svg className="absolute inset-0 h-full w-full" viewBox="0 0 58 18" preserveAspectRatio="none" aria-hidden="true">
        <defs><linearGradient id={id} x1="0" y1="0" x2="0" y2="1"><stop stopColor={active ? "#f0f0f0" : "#cccccc"} /><stop offset="1" stopColor={active ? "#ffffff" : "#dddddd"} /></linearGradient></defs>
        <path d="M0 0c8 1 4 18 13 18h34c8 0 4-17 11-18z" fill={`url(#${id})`} />
      </svg>
      <span className="relative">{children}</span>
    </button>
  );
}

const glow = "drop-shadow-[0_0_2px_#8cc4ff]";
const A = "#1583ea";
const K = () => <svg width="7" height="5" viewBox="0 0 7 5" aria-hidden="true"><path d="M0 0h7L3.500 5z" fill="#111" /></svg>;

const statusItems: { n: string; w: string; i: React.ReactNode; sep?: boolean }[] = [
  { n: "栅格", w: "w-6", i: <S><path d="M3.500 2v14M6.500 2v14M9.500 2v14M12.500 2v14" stroke="#555" /><path d="M1 4.500h15M1 8.500h15M1 12.500h15" stroke="#777" strokeDasharray="1 1" /></S> },
  { n: "捕捉", w: "w-6", i: <S><path d="M2 2.500h14M2 6.500h14M2 10.500h14M2 14.500h14" stroke="#555" strokeDasharray="1 2" /></S> },
  { n: "捕捉设置", w: "w-4", i: <K />, sep: true },
  { n: "正交", w: "w-7", i: <S><path d="M3.500 2v13.500H16M4 10.500h4.500v5" stroke="#666" strokeWidth="1.400" /></S> },
  { n: "极轴追踪", w: "w-5", i: <Svg w={18} h={18} className={glow}><circle cx="8" cy="9" r="6" stroke={A} strokeWidth="1.500" /><path d="M8 9.500h9M8 9l6-7" stroke={A} strokeWidth="1.300" /></Svg> },
  { n: "极轴设置", w: "w-4", i: <K /> },
  { n: "等轴测草图", w: "w-6", i: <S><path d="M1 1l16 15M9 0v18M17 1L10 8" stroke="#666" strokeWidth="1.300" /></S> },
  { n: "等轴测设置", w: "w-4", i: <K /> },
  { n: "对象捕捉追踪", w: "w-6", i: <Svg w={18} h={18} className={glow}><path d="M1 15.500h16M1 15L15 2" stroke={A} strokeWidth="1.300" /><path d="M7 7h3v3H7z" fill={A} stroke={A} /></Svg> },
  { n: "对象捕捉", w: "w-[26px]", i: <Svg w={18} h={18} className={glow}><path d="M3.500 3.500h13v12h-13z" stroke={A} strokeWidth="1.400" /><path d="M1.500 1.500h4v4h-4z" fill="#19d619" stroke="#111" /></Svg> },
  { n: "对象捕捉设置", w: "w-3", i: <K />, sep: true },
  { n: "线宽显示", w: "w-7", i: <S><path d="M1 4h16M1 9h16M1 14h16" stroke="#666" /><path d="M1 4h9M1 9h7M1 14h7" stroke="#555" strokeWidth="3" /></S>, sep: true },
  { n: "切换工作空间", w: "w-7", i: <S><circle cx="9" cy="9" r="3.700" stroke="#666" strokeWidth="3" /><circle cx="9" cy="9" r="5.700" stroke="#666" strokeWidth="2" strokeDasharray="2.500 1.980" /></S> },
  { n: "工作空间设置", w: "w-3", i: <K />, sep: true },
  { n: "快捷特性", w: "w-8", i: <Svg w={18} h={18} className={glow}><path d="M5.500 4.500h8v9h-8z" fill="#fff" stroke={A} strokeWidth="1.500" /><path d="M7 7.500h5M7 9.500h5M7 11.500h5" stroke={A} strokeDasharray="1 1 3 0" /></Svg>, sep: true },
  { n: "隔离对象", w: "w-6", i: <S><path d="M2.500 2.500h6v6h-6zM7.500 10l3.500 6H4.500z" stroke="#666" strokeWidth="1.400" /><circle cx="13.500" cy="7" r="3" stroke="#666" strokeWidth="1.400" /></S>, sep: true },
  { n: "硬件加速", w: "w-7", i: <Svg w={18} h={18} className={glow}><circle cx="9" cy="9" r="7.500" fill="#0a5ba8" stroke="#0a5ba8" /><path d="M7 12l2 1 5-5" stroke="#6ab7ff" /></Svg>, sep: true },
  { n: "自定义", w: "w-7", i: <S><path d="M2 4h14M2 9h14M2 14h14" stroke="#555" strokeWidth="1.500" /></S> },
];

function BottomBar() {
  return (
    <footer className="flex h-[29px] shrink-0 justify-between border-t border-[#9c9c9c] bg-[#b2b2b2]">
      <div className="flex items-start pl-1.5">
        <LayoutTab id="l1" active>模型</LayoutTab>
        <LayoutTab id="l2">布局1</LayoutTab>
        <LayoutTab id="l3">布局2</LayoutTab>
        <button type="button" aria-label="新建布局" className="ml-2 flex h-[15px] w-[22px] items-center justify-center rounded-tl rounded-tr rounded-br-xl rounded-bl border border-[#d8d8d8] bg-[#e6e6e6]">
          <Svg w={8} h={8}><path d="M4 0v8M0 4h8" strokeWidth="2" /></Svg>
        </button>
      </div>
      <div className="flex h-[27px] bg-[#e4e4e4] text-black">
        <button type="button" className="w-8 border-r border-[#f4f4f4] font-bold">模型</button>
        {statusItems.map((s) => (
          <button key={s.n} type="button" aria-label={s.n} className={`flex items-center justify-center ${s.w} ${s.sep ? "border-r border-[#f6f6f6]" : ""}`}>
            {s.i}
          </button>
        ))}
      </div>
    </footer>
  );
}

function Taskbar() {
  return (
    <div className="flex h-2 shrink-0 items-start overflow-hidden border-t border-[#123] bg-gradient-to-r from-[#1c6ba6] via-[#3a93cf] via-45% to-[#123a6d] text-white">
      <span className="ml-3 h-7 w-7 shrink-0 rounded-full border border-[#dfe9f2] bg-[#8095a8]" />
      <span className="mt-1 ml-8 h-4 w-[18px] shrink-0 bg-[#e6e34a]" />
      <span className="mt-1 ml-2 h-4 w-2 shrink-0 rounded-t bg-[#f5ee10]" />
      <span className="ml-4 h-4 w-[51px] shrink-0 border border-[#234] bg-gradient-to-r from-[#d4ebf5] to-[#6db3d8]" />
      <span className="mt-1 ml-7 h-6 w-6 shrink-0 rounded-full bg-[#1683e0]" />
      <span className="mt-1 ml-[38px] h-6 w-6 shrink-0 rounded-full bg-[#62c5ec]" />
      <span className="ml-5 flex h-4 w-[58px] shrink-0 justify-center border border-[#234] bg-gradient-to-r from-[#d4ebf5] to-[#6db3d8] pt-0.5"><span className="h-4 w-8 rounded bg-[#08a0f5]" /></span>
      <span className="mt-1 ml-20 h-4 w-7 shrink-0 border-2 border-[#e8210c] bg-[#410]" />
      <span className="mt-1 ml-9 h-4 w-4 shrink-0 rounded-tl-full bg-[#1e7145]" />
      <span className="ml-[29px] flex h-4 w-[59px] shrink-0 justify-center border border-[#234] bg-gradient-to-r from-[#d4ebf5] to-[#6db3d8] pt-0.5"><span className="h-4 w-8 bg-[#f7e4de]" /></span>
      <time className="mt-1 ml-auto pr-[22px] leading-3">10:40</time>
      <span className="h-4 w-[15px] shrink-0 border border-[#a8bacb] bg-[#54779c]" />
    </div>
  );
}

export default function App() {
  return (
    <div className="flex h-screen flex-col overflow-hidden bg-[#b2b2b2] font-['Noto_Sans','Noto_Sans_CJK_SC',sans-serif] text-xs text-[#333]">
      <Header />
      <Ribbon />
      <FileTabs />
      <div className="relative flex min-h-0 flex-1 flex-col">
        <div className="flex min-h-0 flex-1">
          <Canvas />
          <div className="flex w-4 shrink-0 flex-col items-center bg-[#f0f0f0]">
            <svg width="7" height="4" viewBox="0 0 7 4" className="mt-2" aria-hidden="true"><path d="M0 4h7L3.500 0z" fill="#333" /></svg>
            <span className="mt-10 h-[15px] w-[15px] rounded-xs border border-[#8c8c8c] bg-gradient-to-r from-[#fafafa] to-[#c8c8c8]" />
          </div>
          <div className="w-[9px] shrink-0 border-r-2 border-l border-r-[#17c7e6] border-l-white bg-gradient-to-b from-[#bcd3ec] from-20% to-[#b4cee9]" />
        </div>
        <div className="flex h-[17px] shrink-0 items-center bg-[#f0f0f0] pl-1.5">
          <svg width="4" height="7" viewBox="0 0 4 7" aria-hidden="true"><path d="M4 0v7L0 3.500z" fill="#333" /></svg>
        </div>
        <CommandLine />
        <WorkspaceMenu />
      </div>
      <BottomBar />
      <Taskbar />
    </div>
  );
}
